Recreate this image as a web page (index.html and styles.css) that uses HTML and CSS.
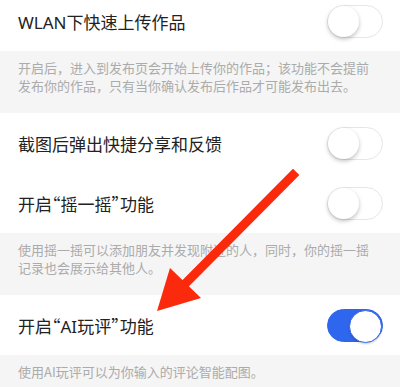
FILE: index.html
```html
<!DOCTYPE html>
<html lang="zh-CN">
<head>
    <meta charset="UTF-8">
    <meta name="viewport" content="width=device-width, initial-scale=1.0">
    <title>设置</title>
    <link rel="stylesheet" href="styles.css">
</head>
<body>

    <div class="settings">
        <div class="row">
            <span class="label">WLAN下快速上传作品</span>
            <span class="switch"></span>
        </div>
        <p class="note">开启后，进入到发布页会开始上传你的作品；该功能不会提前发布你的作品，只有当你确认发布后作品才可能发布出去。</p>

        <div class="row">
            <span class="label">截图后弹出快捷分享和反馈</span>
            <span class="switch"></span>
        </div>
        <div class="row">
            <span class="label">开启<span class="q">“</span>摇一摇<span class="q">”</span>功能</span>
            <span class="switch"></span>
        </div>
        <p class="note">使用摇一摇可以添加朋友并发现附近的人，同时，你的摇一摇记录也会展示给其他人。</p>

        <div class="row">
            <span class="label">开启<span class="q">“</span>AI玩评<span class="q">”</span>功能</span>
            <span class="switch on"></span>
        </div>
        <p class="note">使用AI玩评可以为你输入的评论智能配图。</p>
    </div>

    <!-- 红色箭头标注 -->
    <svg class="arrow" width="400" height="387" viewBox="0 0 400 387">
        <line x1="293" y1="175" x2="182" y2="287" stroke="#fb2a0c" stroke-width="9" stroke-linecap="square"/>
        <polygon points="157,311 170,268 201,298" fill="#fb2a0c"/>
    </svg>

</body>
</html>
```

FILE: styles.css
```css
* {
    margin: 0;
    padding: 0;
    box-sizing: border-box;
}

body {
    font-family: "Noto Sans", "Noto Sans CJK SC", sans-serif;
    background: #ffffff;
    width: 400px;
    height: 387px;
    overflow: hidden;
    position: relative;
}

/* 列表 */
.settings {
    margin-top: -9px;
}

.row {
    height: 60px;
    display: flex;
    align-items: center;
    justify-content: space-between;
    padding: 0 17px 0 18px;
    background: #ffffff;
}

.label {
    font-family: "Noto Sans", "Noto Sans CJK SC", sans-serif;
    font-size: 17px;
    color: #222222;
}

/* 中文引号用半角宽度 */
.q {
    font-family: "Noto Sans CJK SC", sans-serif;
    font-feature-settings: "halt";
}

.note {
    font-family: "Noto Sans CJK SC", sans-serif;
    background: #f5f5f5;
    color: #ababab;
    font-size: 13px;
    line-height: 18px;
    padding: 8px 26px 18px 18px;
}

/* 开关 */
.switch {
    position: relative;
    width: 56px;
    height: 33px;
    border-radius: 17px;
    background: #ffffff;
    border: 1px solid #e6e6e6;
}

.switch::after {
    content: "";
    position: absolute;
    top: 0;
    left: 0;
    width: 31px;
    height: 31px;
    border-radius: 50%;
    background: #ffffff;
    box-shadow: 0 2px 4px rgba(0, 0, 0, 0.25);
}

.switch.on {
    background: #2f66ee;
    border-color: #2f66ee;
}

.switch.on::after {
    left: auto;
    right: 0;
    border: 1px solid #2f66ee;
    box-shadow: 0 1px 2px rgba(0, 0, 0, 0.2);
}

.arrow {
    position: absolute;
    top: 0;
    left: 0;
}
```
